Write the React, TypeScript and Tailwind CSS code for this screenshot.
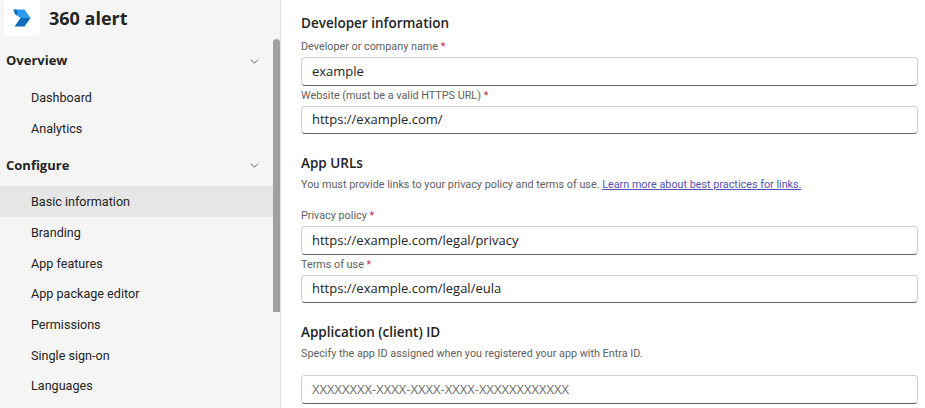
import { ChevronDown } from 'lucide-react';

const overview = ['Dashboard', 'Analytics'];
const configure = ['Basic information', 'Branding', 'App features', 'App package editor', 'Permissions', 'Single sign-on', 'Languages'];

function NavGroup({ title, items, className }: { title: string; items: string[]; className: string }) {
  return (
    <div className={className}>
      <div className="flex h-8 items-center justify-between pl-[6px] pr-[19px] font-['Open_Sans',sans-serif] text-[13px] font-bold text-[#242424]">
        <span>{title}</span>
        <ChevronDown className="h-[13px] w-[13px] text-[#424242]" strokeWidth={1.5} />
      </div>
      <ul className="mt-[5px]">
        {items.map((item) => (
          <li
            key={item}
            className={`flex h-[30.7px] items-center pl-[31px] pt-[2px] font-['Roboto',sans-serif] text-[12.6px] text-[#242424] ${item === 'Basic information' ? 'bg-[#e6e6e6]' : ''}`}
          >
            {item}
          </li>
        ))}
      </ul>
    </div>
  );
}

function Field({ label, value, placeholder }: { label: string; value?: string; placeholder?: string }) {
  return (
    <div>
      <label className="block h-[20px] font-['Roboto',sans-serif] text-[10.8px] leading-[20px] text-[#616161]">
        {label} <span className="text-[#c4314b]">*</span>
      </label>
      <Input value={value} placeholder={placeholder} />
    </div>
  );
}

function Input({ value, placeholder }: { value?: string; placeholder?: string }) {
  return (
    <div className="flex h-[28.5px] w-[617px] items-center rounded-[4px] border border-[#d1d1d1] border-b-[#616161] bg-white pl-[10px] text-[13px] text-[#242424]">
      {value ?? <span className="text-[#707070]">{placeholder}</span>}
    </div>
  );
}

export default function App() {
  return (
    <div className="flex h-[408px] w-[925px] overflow-hidden bg-white font-['Open_Sans','Noto_Sans',sans-serif]">
      <aside className="relative h-full w-[281px] shrink-0 overflow-hidden border-r border-[#e0e0e0] bg-[#f5f5f5]">
        <div className="flex h-[36px] items-center">
          <div className="ml-[4px] flex h-[36px] w-[36px] items-center justify-center rounded-b-[4px] bg-white">
            <svg width="18" height="18" viewBox="0 0 18 18">
              <path d="M0.5 0.5H11.5L17.5 9H7.5L2 5Z" fill="#2f9bf0" />
              <path d="M7.5 9H17.5L11.5 17.5H1.5Z" fill="#0f6cbd" />
              <path d="M0.5 0.5L2 5L4 6.5L4.5 1Z" fill="#0f6cbd" />
            </svg>
          </div>
          <span className="ml-[9px] text-[18px] font-bold text-[#242424]">360 alert</span>
        </div>
        <NavGroup title="Overview" items={overview} className="mt-[9px]" />
        <NavGroup title="Configure" items={configure} className="mt-[6px]" />
        <div className="absolute left-[273px] top-[39px] h-[273px] w-[7px] rounded-t-[4px] bg-[#a0a0a0]" />
      </aside>
      <main className="flex-1 pl-[20px] pt-[13px]">
        <h2 className="h-[20px] text-[13.5px] font-semibold leading-[20px] text-[#242424]">Developer information</h2>
        <div className="mt-[4px]">
          <Field label="Developer or company name" value="example" />
          <Field label="Website (must be a valid HTTPS URL)" value="https://example.com/" />
        </div>
        <h2 className="mt-[19px] h-[20px] text-[13.5px] font-semibold leading-[20px] text-[#242424]">App URLs</h2>
        <p className="mt-[2px] h-[20px] font-['Roboto',sans-serif] text-[10.8px] leading-[20px] text-[#616161]">
          You must provide links to your privacy policy and terms of use.{' '}
          <a className="text-[#4f52b2] underline">Learn more about best practices for links.</a>
        </p>
        <div className="mt-[11px]">
          <Field label="Privacy policy" value="https://example.com/legal/privacy" />
          <Field label="Terms of use" value="https://example.com/legal/eula" />
        </div>
        <h2 className="mt-[19px] h-[20px] text-[13.5px] font-semibold leading-[20px] text-[#242424]">Application (client) ID</h2>
        <p className="mt-[2px] h-[20px] font-['Roboto',sans-serif] text-[10.8px] leading-[20px] text-[#616161]">
          Specify the app ID assigned when you registered your app with Entra ID.
        </p>
        <div className="mt-[11px]">
          <Input placeholder="XXXXXXXX-XXXX-XXXX-XXXX-XXXXXXXXXXXX" />
        </div>
      </main>
    </div>
  );
}
